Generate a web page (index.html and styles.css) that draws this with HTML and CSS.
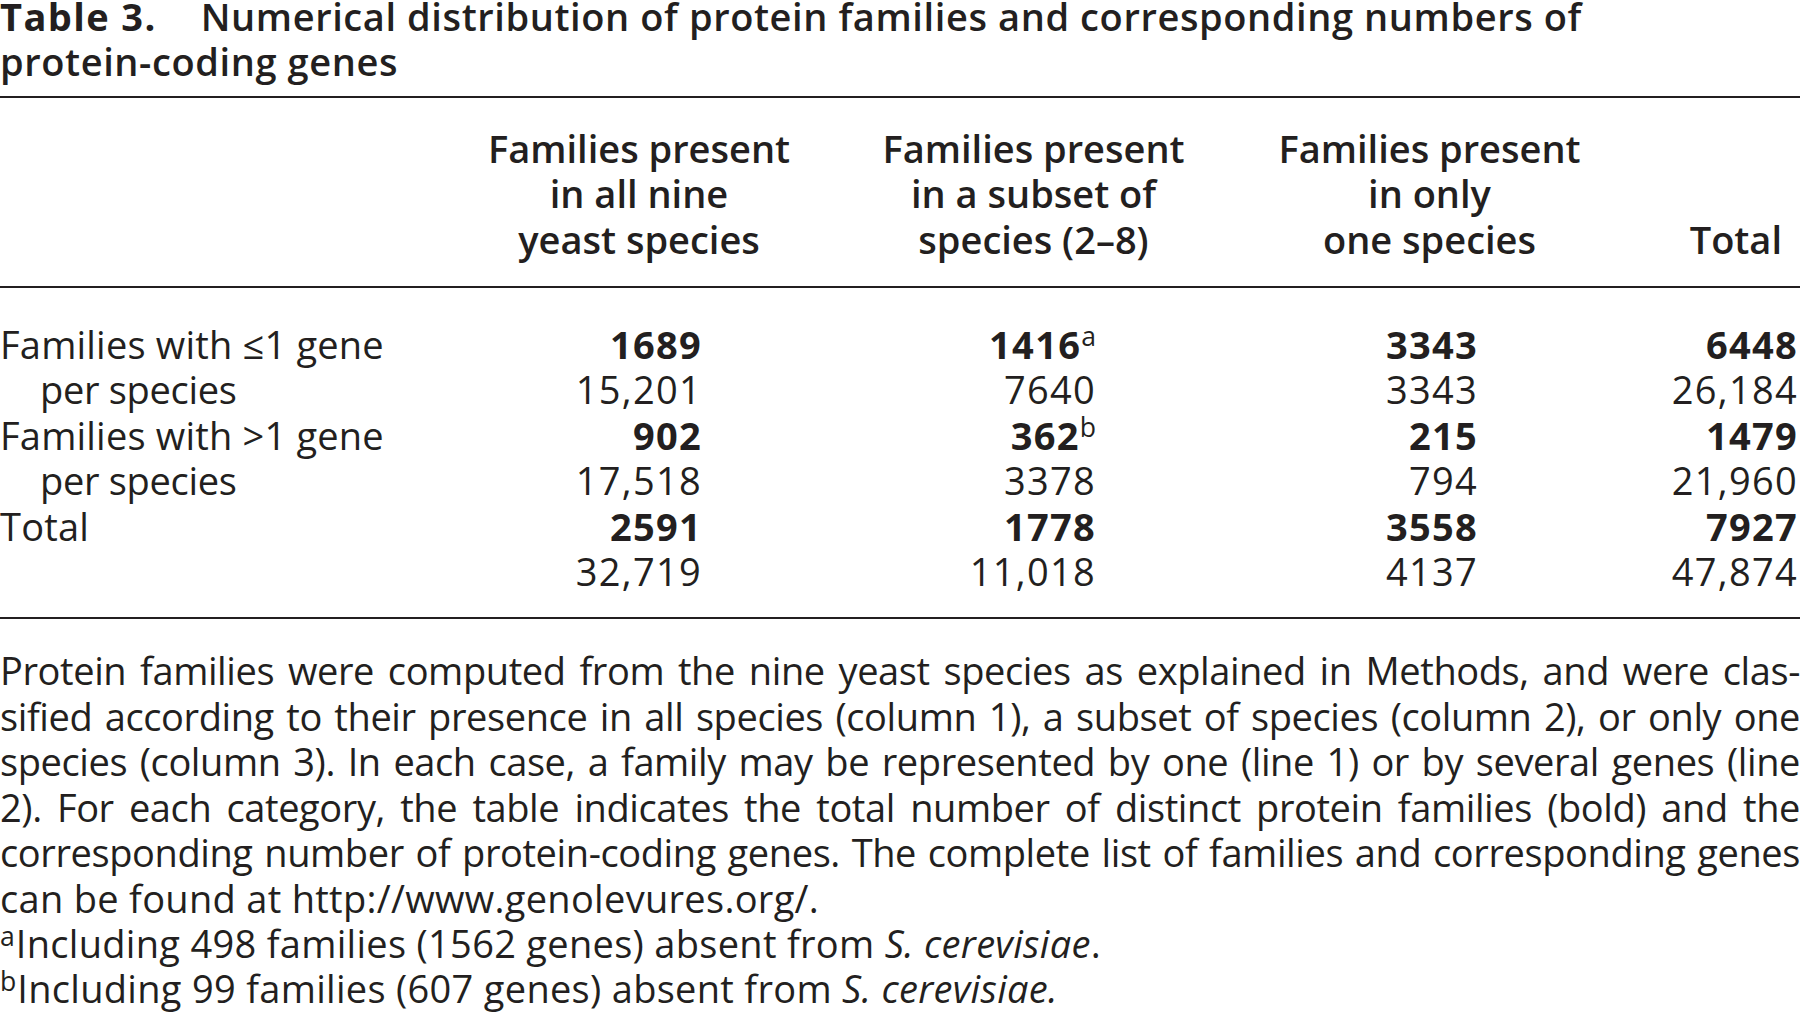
FILE: index.html
```html
<!DOCTYPE html>
<html>
<head>
<meta charset="utf-8">
<link rel="stylesheet" href="styles.css">
</head>
<body>
<div class="page">
  <div class="title"><span class="tnum">Table 3.</span><span class="tgap"></span>Numerical distribution of protein families and corresponding numbers of<br>protein-coding genes</div>
  <table class="data">
    <colgroup>
      <col class="c0"><col class="c1"><col class="c2"><col class="c3"><col class="c4">
    </colgroup>
    <thead>
      <tr>
        <th class="h-blank"></th>
        <th class="h-mid">Families present<br>in all nine<br>yeast species</th>
        <th class="h-mid">Families present<br>in a subset of<br>species (2–8)</th>
        <th class="h-mid">Families present<br>in only<br>one species</th>
        <th class="h-total"><br><br>Total</th>
      </tr>
    </thead>
    <tbody>
      <tr class="first">
        <td class="lab">Families with ≤1 gene</td>
        <td class="n n1 b">1689</td>
        <td class="n n2 b">1416<sup>a</sup></td>
        <td class="n n3 b">3343</td>
        <td class="n n4 b">6448</td>
      </tr>
      <tr>
        <td class="lab ind">per species</td>
        <td class="n n1">15,201</td>
        <td class="n n2">7640</td>
        <td class="n n3">3343</td>
        <td class="n n4">26,184</td>
      </tr>
      <tr>
        <td class="lab">Families with &gt;1 gene</td>
        <td class="n n1 b">902</td>
        <td class="n n2 b">362<sup>b</sup></td>
        <td class="n n3 b">215</td>
        <td class="n n4 b">1479</td>
      </tr>
      <tr>
        <td class="lab ind">per species</td>
        <td class="n n1">17,518</td>
        <td class="n n2">3378</td>
        <td class="n n3">794</td>
        <td class="n n4">21,960</td>
      </tr>
      <tr>
        <td class="lab">Total</td>
        <td class="n n1 b">2591</td>
        <td class="n n2 b">1778</td>
        <td class="n n3 b">3558</td>
        <td class="n n4 b">7927</td>
      </tr>
      <tr class="last">
        <td class="lab"></td>
        <td class="n n1">32,719</td>
        <td class="n n2">11,018</td>
        <td class="n n3">4137</td>
        <td class="n n4">47,874</td>
      </tr>
    </tbody>
  </table>
  <div class="notes">
    <div class="jl">Protein families were computed from the nine yeast species as explained in Methods, and were clas-</div>
    <div class="jl">sified according to their presence in all species (column 1), a subset of species (column 2), or only one</div>
    <div class="jl">species (column 3). In each case, a family may be represented by one (line 1) or by several genes (line</div>
    <div class="jl">2). For each category, the table indicates the total number of distinct protein families (bold) and the</div>
    <div class="jl">corresponding number of protein-coding genes. The complete list of families and corresponding genes</div>
    <div class="ll">can be found at http://www.genolevures.org/.</div>
    <div class="ll"><sup>a</sup>Including 498 families (1562 genes) absent from <i>S. cerevisiae</i>.</div>
    <div class="ll"><sup>b</sup>Including 99 families (607 genes) absent from <i>S. cerevisiae.</i></div>
  </div>
</div>
</body>
</html>
```

FILE: styles.css
```css
html, body {
  margin: 0;
  padding: 0;
  background: #ffffff;
}

body {
  font-family: "Open Sans", "Noto Sans", sans-serif;
  font-size: 38px;
  line-height: 45.4px;
  color: #231f20;
}

.page {
  width: 1800px;
  overflow: hidden;
}

.title {
  margin-top: -6px;
  font-weight: 600;
  white-space: nowrap;
  letter-spacing: 0.6px;
}

.tnum {
  font-weight: 700;
  letter-spacing: 1.4px;
}

.tgap {
  display: inline-block;
  width: 44px;
}

.data {
  margin-top: 11px;
  width: 1800px;
  border-collapse: collapse;
  table-layout: fixed;
  border-top: 2px solid #231f20;
  border-bottom: 2px solid #231f20;
}

.c0 { width: 442px; }
.c1 { width: 394px; }
.c2 { width: 395px; }
.c3 { width: 397px; }
.c4 { width: 172px; }

.data thead tr {
  border-bottom: 2px solid #231f20;
}

.data th {
  font-weight: 600;
  padding: 28px 0 24px 0;
  vertical-align: top;
  white-space: nowrap;
}

.h-mid {
  text-align: center;
}

.h-total {
  text-align: right;
  padding-right: 18px !important;
}

.data td {
  padding: 0;
  white-space: nowrap;
}

.data tr.first td {
  padding-top: 34px;
}

.data tr.last td {
  padding-bottom: 23px;
}

.lab {
  text-align: left;
  letter-spacing: 0.2px;
}

.ind {
  padding-left: 40px !important;
  letter-spacing: -0.3px;
}

.n {
  text-align: right;
  letter-spacing: 1.3px;
}

.n1 { padding-right: 134px !important; }
.n2 { padding-right: 135px !important; }
.n3 { padding-right: 150px !important; }
.n4 { padding-right: 2px !important; }

.b {
  font-weight: 700;
}

sup {
  font-size: 0.7em;
  font-weight: 400;
  line-height: 0;
  letter-spacing: 0;
  vertical-align: 0.5em;
}

.notes {
  margin-top: 29px;
}

.jl {
  text-align: justify;
  text-align-last: justify;
  white-space: nowrap;
  word-spacing: -6px;
  letter-spacing: -0.4px;
}

.ll {
  white-space: nowrap;
  letter-spacing: 0.3px;
}

.notes sup {
  vertical-align: 0.45em;
  margin-right: 1px;
}
```
